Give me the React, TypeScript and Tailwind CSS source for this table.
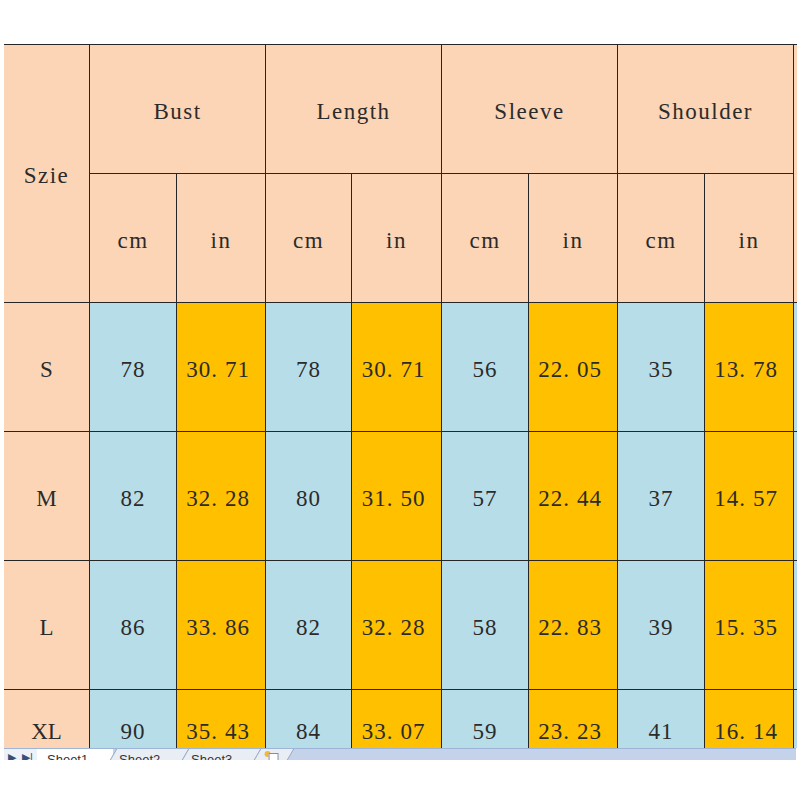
const rows = [
  { size: "S", v: ["78", "30.71", "78", "30.71", "56", "22.05", "35", "13.78"] },
  { size: "M", v: ["82", "32.28", "80", "31.50", "57", "22.44", "37", "14.57"] },
  { size: "L", v: ["86", "33.86", "82", "32.28", "58", "22.83", "39", "15.35"] },
  { size: "XL", v: ["90", "35.43", "84", "33.07", "59", "23.23", "41", "16.14"] },
];

const groups = ["Bust", "Length", "Sleeve", "Shoulder"];

const cell = "flex items-center justify-center pt-[6px] text-[#2b2b2b]";
const head = "tracking-[1.5px]";

function Num({ n }: { n: string }) {
  const [a, b] = n.split(".");
  if (b === undefined) return <span>{n}</span>;
  return (
    <span className="-ml-[6px]">
      {a}
      <span className="mr-[7px]">.</span>
      {b}
    </span>
  );
}

export default function App() {
  return (
    <div className="w-[800px] h-[800px] bg-white overflow-hidden font-['Liberation_Serif',serif] text-[23px]">
      <div className="h-[44px]" />
      {/* sheet */}
      <div className="ml-[4px] w-[793px] h-[704px] overflow-hidden bg-[#262626] pt-px">
        <div className="grid gap-px grid-cols-[85px_86px_88px_85px_89px_86px_88px_86px_88px_3px] grid-rows-[128px_128px_128px_128px_128px_78px]">
          <div className={`${cell} ${head} row-span-2 bg-[#fbd5b5]`}>Szie</div>
          {groups.map((g) => (
            <div key={g} className={`${cell} ${head} col-span-2 bg-[#fbd5b5]`}>
              {g}
            </div>
          ))}
          <div className="row-span-2 bg-[#fbd5b5]" />
          {groups.map((g) => [
            <div key={g + "cm"} className={`${cell} ${head} bg-[#fbd5b5]`}>cm</div>,
            <div key={g + "in"} className={`${cell} ${head} bg-[#fbd5b5]`}>in</div>,
          ])}
          {rows.map((r) => [
            <div key={r.size} className={`${cell} bg-[#fbd5b5]`}>
              {r.size}
            </div>,
            ...r.v.map((n, i) => (
              <div
                key={r.size + i}
                className={`${cell} tracking-[1px] ${i % 2 === 0 ? "bg-[#b7dde8]" : "bg-[#ffc000]"}`}
              >
                <Num n={n} />
              </div>
            )),
            <div key={r.size + "x"} className="bg-[#b7dde8]" />,
          ])}
        </div>
      </div>
      {/* sheet tabs, cut off at the bottom */}
      <div className="ml-[4px] w-[792px] h-[12px] overflow-hidden flex items-start bg-[#c4d3ea] border-t border-[#9fb5d8] font-['Liberation_Sans',sans-serif] text-[13px] leading-none text-[#333]">
        <div className="w-[33px] h-full bg-[#eef1f6] flex gap-[6px] pl-[4px] pt-[3px] text-[#36507a] text-[11px]">
          <span>▶</span>
          <span>▶|</span>
        </div>
        <div className="w-[76px] h-full bg-white pt-[4px] pl-[10px]">Sheet1</div>
        <div className="w-[72px] h-full bg-[#e9edf4] border-l border-[#8ea3c4] -skew-x-[30deg] pt-[4px] pl-[8px]">
          <div className="skew-x-[30deg]">Sheet2</div>
        </div>
        <div className="w-[72px] h-full bg-[#e9edf4] border-l border-[#8ea3c4] -skew-x-[30deg] pt-[4px] pl-[8px]">
          <div className="skew-x-[30deg]">Sheet3</div>
        </div>
        <div className="w-[34px] h-full bg-[#e9edf4] border-l border-r border-[#8ea3c4] -skew-x-[30deg] pt-[2px] pl-[8px]">
          <div className="skew-x-[30deg] flex items-start">
            <span className="w-[6px] h-[6px] rounded-full bg-[#f3b73a]" />
            <span className="w-[10px] h-[10px] -ml-[2px] mt-[2px] border border-[#7d8ea8] bg-white" />
          </div>
        </div>
      </div>
    </div>
  );
}
